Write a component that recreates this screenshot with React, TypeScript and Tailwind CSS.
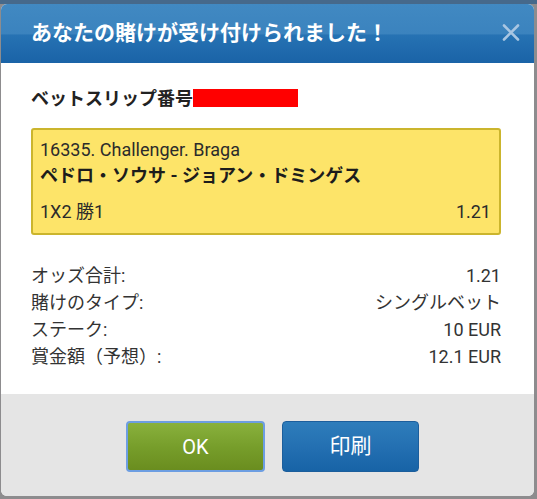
const rows = [
  { label: 'オッズ合計:', value: '1.21' },
  { label: '賭けのタイプ:', value: 'シングルベット' },
  { label: 'ステーク:', value: '10 EUR' },
  { label: '賞金額（予想）:', value: '12.1 EUR' },
];

const font = "font-['Roboto','Noto_Sans_CJK_JP',sans-serif]";

export default function App() {
  return (
    <div className={`w-[537px] h-[499px] bg-[#8d8c8e] border-t-4 border-[#46698b] pl-[1px] ${font}`}>
      <div className="w-[533px] h-[492px] flex flex-col rounded-md overflow-hidden bg-white">
        {/* header */}
        <div className="h-[59px] shrink-0 flex items-center justify-between pl-[30px] pr-[14px] bg-[linear-gradient(#4189c2_0%,#3b83be_50%,#2672b3_53%,#1a63a7_100%)]">
          <h1 className="text-[21px] font-bold text-white">あなたの賭けが受け付けられました！</h1>
          <svg width="18" height="17" viewBox="0 0 18 17" className="mt-[-2px]">
            <path d="M2 1.5 L16 15.5 M16 1.5 L2 15.5" stroke="#a9c6e2" strokeWidth="2.6" strokeLinecap="round" />
          </svg>
        </div>

        {/* body */}
        <div className="flex-1 flex flex-col pt-[22px] pl-[30px] pr-[33px] text-[#2a2a2a]">
          <div className="flex items-center h-[26px]">
            <span className="text-[18px] font-bold text-[#222]">ベットスリップ番号</span>
            <span className="w-[105px] h-[18px] bg-[#ff0000]" />
          </div>

          <div className="mt-[17px] h-[107px] border-2 border-[#cbb52d] rounded-[3px] bg-[#fde469] pl-[7px] pr-[8px] pt-[7px]">
            <div className="text-[18px] leading-[26px] text-[#2b2b2b]">16335. Challenger. Braga</div>
            <div className="text-[18px] leading-[26px] font-bold text-[#1c1c1c]">ペドロ・ソウサ - ジョアン・ドミンゲス</div>
            <div className="mt-[10px] flex justify-between text-[18px] leading-[26px] text-[#2b2b2b]">
              <span>1X2 勝1</span>
              <span>1.21</span>
            </div>
          </div>

          <div className="mt-[27px] flex flex-col">
            {rows.map((r) => (
              <div key={r.label} className="flex justify-between h-[27px] items-center text-[18px] text-[#333]">
                <span>{r.label}</span>
                <span>{r.value}</span>
              </div>
            ))}
          </div>
        </div>

        {/* footer */}
        <div className="h-[102px] shrink-0 bg-[#e5e5e5] flex items-center justify-center gap-[17px] pl-[10px] pt-[3px]">
          <button className="w-[139px] h-[51px] rounded-[4px] border-2 border-[#6d9ee2] bg-[linear-gradient(#89b13d,#779e2b_50%,#6a8d1f)] text-white text-[20px]">
            OK
          </button>
          <button className="w-[137px] h-[51px] rounded-[4px] border border-[#1c5e9c] bg-[linear-gradient(#2e7dbb,#2470b2_50%,#1763a6)] text-white text-[21px]">
            印刷
          </button>
        </div>
      </div>
    </div>
  );
}
